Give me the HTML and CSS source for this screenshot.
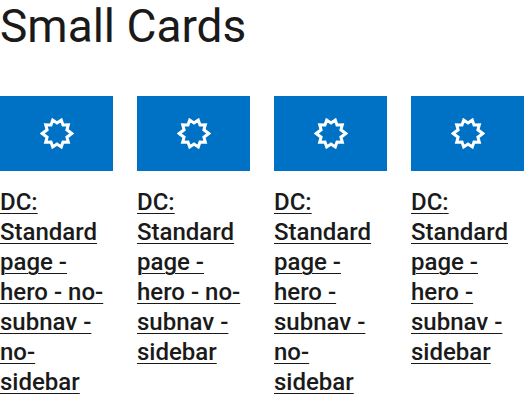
FILE: index.html
```html
<!DOCTYPE html>
<html lang="en">
<head>
<meta charset="utf-8">
<title>Small Cards</title>
<link rel="stylesheet" href="styles.css">
</head>
<body>
<svg class="defs" aria-hidden="true"><symbol id="burst" viewBox="0 0 34 34"><path d="M17 6 21.300 3 23 8 28.300 7.800 26.900 12.800 31.800 16.500 26.900 20.200 28.300 25.200 23 25 21.300 30 17 27 12.700 30 11 25 5.700 25.200 7.100 20.200 2.200 16.500 7.100 12.800 5.700 7.800 11 8 12.700 3Z" fill="none" stroke="#fff" stroke-width="3"/></symbol></svg>
<section>
<h1 class="title">Small Cards</h1>
<div class="cards">
<article class="card"><div class="media"><svg class="icon" aria-hidden="true"><use href="#burst"/></svg></div><h2 class="name"><a href="#">DC: Standard page - hero - no-subnav - no-sidebar</a></h2></article>
<article class="card"><div class="media"><svg class="icon" aria-hidden="true"><use href="#burst"/></svg></div><h2 class="name"><a href="#">DC: Standard page - hero - no-subnav - sidebar</a></h2></article>
<article class="card"><div class="media"><svg class="icon" aria-hidden="true"><use href="#burst"/></svg></div><h2 class="name"><a href="#">DC: Standard page - hero - subnav - no-sidebar</a></h2></article>
<article class="card"><div class="media"><svg class="icon" aria-hidden="true"><use href="#burst"/></svg></div><h2 class="name"><a href="#">DC: Standard page - hero - subnav - sidebar</a></h2></article>
</div>
</section>
</body>
</html>
```
FILE: styles.css
```css
body {
  margin: 0;
  color: #1a1a1a;
  background: #fff;
  font-family: Roboto, "Liberation Sans", sans-serif;
}
.defs { display: none; }
.title {
  margin: 0 0 44px;
  font-size: 46px;
  line-height: 52px;
  font-weight: 400;
}
.cards {
  display: grid;
  grid-template-columns: repeat(4, 1fr);
  gap: 24px;
}
.card { min-width: 0; }
.media {
  display: flex;
  align-items: center;
  justify-content: center;
  aspect-ratio: 3 / 2;
  background: #0072c6;
}
.icon { width: 34px; height: 34px; }
.name {
  margin: 16px 0 0;
  font-size: 24px;
  line-height: 30px;
  font-weight: 500;
}
.name a {
  color: inherit;
  text-decoration: underline;
  text-decoration-thickness: 1px;
  text-underline-offset: 3px;
}
```
